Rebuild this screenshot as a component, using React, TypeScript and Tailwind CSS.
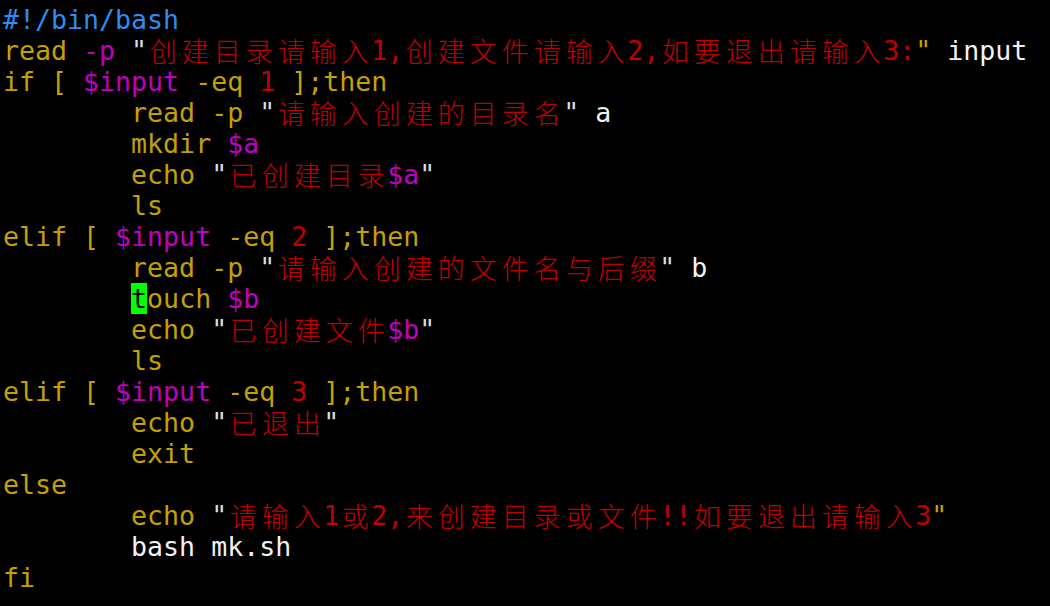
type Color = "blue" | "yel" | "mag" | "red" | "wht" | "quo" | "cur";
type Tok = [string, Color];

const colorClass: Record<Color, string> = {
  blue: "text-[#2b8ff0]",
  yel: "text-[#c4a000]",
  mag: "text-[#c000c0]",
  red: "text-[#c00000]",
  wht: "text-[#f2f2f2]",
  quo: "text-[#dcdcdc]",
  cur: "text-black bg-[#00ff00]",
};

const IND = "        ";

const lines: Tok[][] = [
  [["#!/bin/bash", "blue"]],
  [
    ["read ", "yel"],
    ["-p ", "mag"],
    ['"', "quo"],
    ["创建目录请输入1,创建文件请输入2,如要退出请输入3:", "red"],
    ['"', "yel"],
    [" input", "wht"],
  ],
  [["if [ ", "yel"], ["$input", "mag"], [" -eq ", "yel"], ["1", "red"], [" ];then", "yel"]],
  [[IND + "read -p ", "yel"], ['"', "quo"], ["请输入创建的目录名", "red"], ['"', "quo"], [" a", "wht"]],
  [[IND + "mkdir ", "yel"], ["$a", "mag"]],
  [[IND + "echo ", "yel"], ['"', "quo"], ["已创建目录", "red"], ["$a", "mag"], ['"', "quo"]],
  [[IND + "ls", "yel"]],
  [["elif [ ", "yel"], ["$input", "mag"], [" -eq ", "yel"], ["2", "red"], [" ];then", "yel"]],
  [[IND + "read -p ", "yel"], ['"', "quo"], ["请输入创建的文件名与后缀", "red"], ['"', "quo"], [" b", "wht"]],
  [[IND, "yel"], ["t", "cur"], ["ouch ", "yel"], ["$b", "mag"]],
  [[IND + "echo ", "yel"], ['"', "quo"], ["已创建文件", "red"], ["$b", "mag"], ['"', "quo"]],
  [[IND + "ls", "yel"]],
  [["elif [ ", "yel"], ["$input", "mag"], [" -eq ", "yel"], ["3", "red"], [" ];then", "yel"]],
  [[IND + "echo ", "yel"], ['"', "quo"], ["已退出", "red"], ['"', "quo"]],
  [[IND + "exit", "yel"]],
  [["else", "yel"]],
  [
    [IND + "echo ", "yel"],
    ['"', "quo"],
    ["请输入1或2,来创建目录或文件!!如要退出请输入3", "red"],
    ['"', "yel"],
  ],
  [[IND + "bash mk.sh", "wht"]],
  [["fi", "yel"]],
];

const isWide = (ch: string) => /[\u3000-\u9fff\uff00-\uffef]/.test(ch);

// 全角文字は2セル幅に揃える
function Text({ text }: { text: string }) {
  const parts: React.ReactNode[] = [];
  let buf = "";
  Array.from(text).forEach((ch, i) => {
    if (isWide(ch)) {
      if (buf) parts.push(buf);
      buf = "";
      parts.push(
        <span
          key={i}
          className="inline-block w-[32px] text-center align-top font-['Noto_Sans_CJK_SC',sans-serif] text-[27px] font-light leading-[31px]"
        >
          {ch}
        </span>
      );
    } else {
      buf += ch;
    }
  });
  if (buf) parts.push(buf);
  return <>{parts}</>;
}

export default function App() {
  return (
    <div className="h-[606px] w-[1050px] overflow-hidden bg-black pl-[3px] pt-[4px] font-['DejaVu_Sans_Mono',monospace] text-[26.6px] leading-[31px]">
      {lines.map((line, i) => (
        <div key={i} className="h-[31px] whitespace-pre">
          {line.map(([t, c], j) => (
            <span key={j} className={colorClass[c]}>
              <Text text={t} />
            </span>
          ))}
        </div>
      ))}
    </div>
  );
}
